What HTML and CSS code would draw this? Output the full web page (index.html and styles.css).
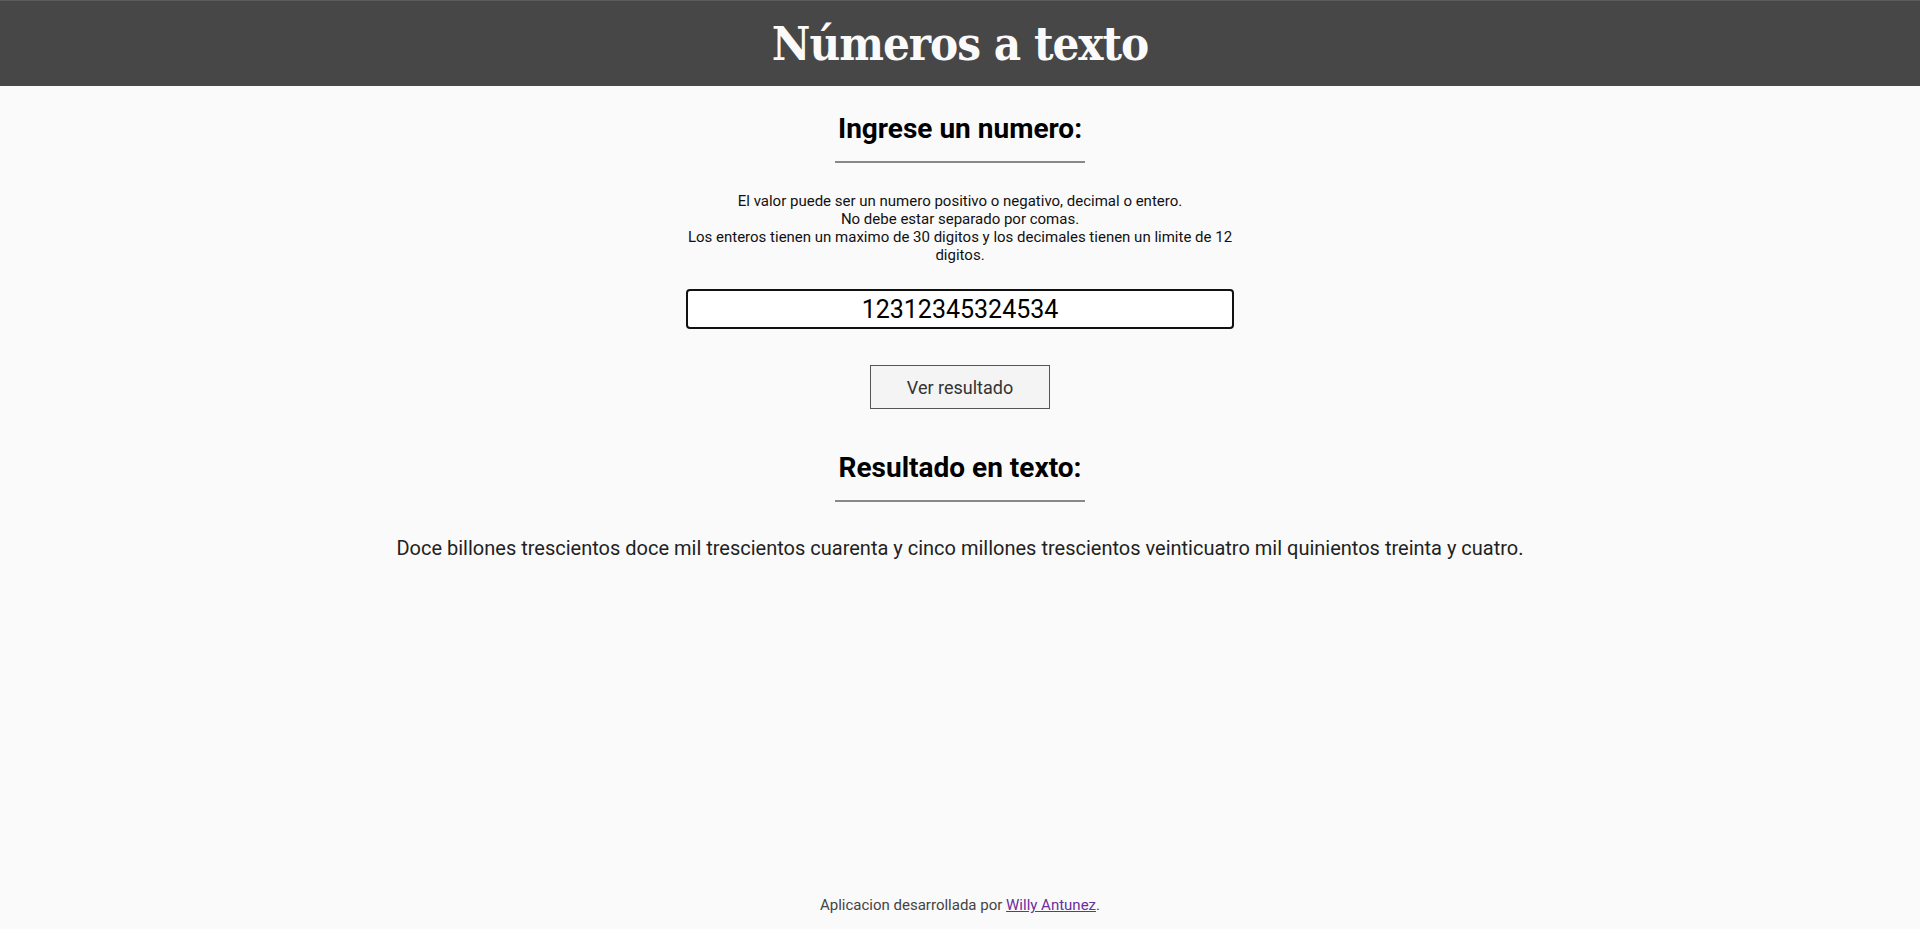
FILE: index.html
```html
<!DOCTYPE html>
<html lang="es">
<head>
<meta charset="utf-8">
<title>Números a texto</title>
<link rel="stylesheet" href="styles.css">
</head>
<body>
<div class="page">
  <header class="topbar">
    <h1 class="title">Números a texto</h1>
  </header>
  <main class="main">
    <h2 class="heading">Ingrese un numero:</h2>
    <div class="rule"></div>
    <p class="desc">El valor puede ser un numero positivo o negativo, decimal o entero.<br>No debe estar separado por comas.<br>Los enteros tienen un maximo de 30 digitos y los decimales tienen un limite de 12 digitos.</p>
    <input class="number-input" type="text" value="12312345324534" autofocus>
    <button class="btn" type="button">Ver resultado</button>
    <h2 class="heading heading-result">Resultado en texto:</h2>
    <div class="rule"></div>
    <p class="result">Doce billones trescientos doce mil trescientos cuarenta y cinco millones trescientos veinticuatro mil quinientos treinta y cuatro.</p>
  </main>
  <footer class="footer">Aplicacion desarrollada por <a class="footer-link" href="#">Willy Antunez</a>.</footer>
</div>
</body>
</html>
```
FILE: styles.css
```css
html, body {
  margin: 0;
  padding: 0;
}
body {
  background: #fafafa;
  font-family: Roboto, "Noto Sans", sans-serif;
  color: #111;
}
.page {
  min-height: 100vh;
  display: flex;
  flex-direction: column;
}
.topbar {
  height: 85px;
  border-top: 1px solid #5c5c5c;
  background: #474747;
  display: flex;
  align-items: center;
  justify-content: center;
}
.title {
  margin: 0;
  font-family: "DejaVu Serif Condensed", "DejaVu Serif", serif;
  font-weight: 700;
  font-size: 47px;
  letter-spacing: -1px;
  color: #fafafa;
  line-height: 1;
}
.main {
  display: flex;
  flex-direction: column;
  align-items: center;
}
.heading {
  margin: 26px 0 0;
  font-size: 28px;
  font-weight: 700;
  line-height: 33px;
  color: #000;
}
.heading-result {
  margin-top: 42px;
}
.rule {
  width: 250px;
  height: 2px;
  background: #888;
  margin-top: 16px;
}
.desc {
  width: 550px;
  margin: 29px 0 0;
  font-size: 15px;
  line-height: 18px;
  text-align: center;
  color: #111;
}
.number-input {
  box-sizing: border-box;
  width: 548px;
  height: 40px;
  margin-top: 25px;
  border: 2px solid #111;
  border-radius: 4px;
  background: #fff;
  font-family: Roboto, sans-serif;
  font-size: 25px;
  text-align: center;
  color: #000;
  caret-color: #000;
  padding: 0 8px;
  outline: none;
}
.btn {
  box-sizing: border-box;
  width: 180px;
  height: 44px;
  margin-top: 36px;
  border: 1px solid #555;
  background: #f4f4f4;
  font-family: Roboto, sans-serif;
  font-size: 18px;
  color: #333;
  cursor: pointer;
}
.result {
  margin: 34px 0 0;
  font-size: 20px;
  line-height: 24px;
  color: #222;
  text-align: center;
}
.footer {
  margin-top: auto;
  padding-bottom: 15px;
  text-align: center;
  font-size: 15px;
  color: #444;
}
.footer-link {
  color: #6a2ea0;
}
```
